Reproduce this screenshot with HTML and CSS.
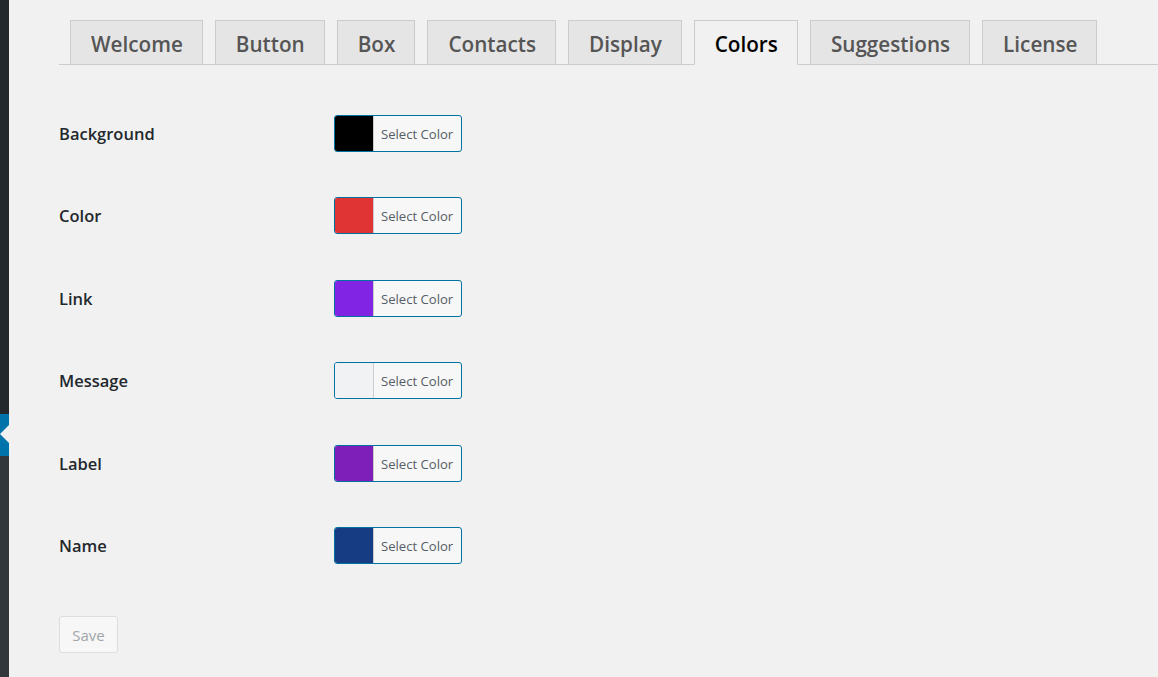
FILE: index.html
```html
<!DOCTYPE html>
<html lang="en">
<head>
<meta charset="UTF-8">
<meta name="viewport" content="width=device-width, initial-scale=1.0">
<title>Colors</title>
<link rel="stylesheet" href="styles.css">
</head>
<body>
<div class="sidebar">
    <div class="menu-top"></div>
    <div class="menu-current"><span class="menu-arrow"></span></div>
    <div class="menu-sub"></div>
</div>
<div class="wrap">
    <nav class="nav-tabs">
        <a class="nav-tab" href="#">Welcome</a>
        <a class="nav-tab" href="#">Button</a>
        <a class="nav-tab" href="#">Box</a>
        <a class="nav-tab" href="#">Contacts</a>
        <a class="nav-tab" href="#">Display</a>
        <a class="nav-tab active" href="#">Colors</a>
        <a class="nav-tab" href="#">Suggestions</a>
        <a class="nav-tab" href="#">License</a>
    </nav>
    <form class="colors-form">
        <div class="form-row">
            <label>Background</label>
            <button type="button" class="color-result"><span class="swatch" style="background:#000000"></span><span class="color-text">Select Color</span></button>
        </div>
        <div class="form-row">
            <label>Color</label>
            <button type="button" class="color-result"><span class="swatch" style="background:#e03434"></span><span class="color-text">Select Color</span></button>
        </div>
        <div class="form-row">
            <label>Link</label>
            <button type="button" class="color-result"><span class="swatch" style="background:#8224e3"></span><span class="color-text">Select Color</span></button>
        </div>
        <div class="form-row">
            <label>Message</label>
            <button type="button" class="color-result"><span class="swatch" style="background:#f1f2f3"></span><span class="color-text">Select Color</span></button>
        </div>
        <div class="form-row">
            <label>Label</label>
            <button type="button" class="color-result"><span class="swatch" style="background:#7f1fba"></span><span class="color-text">Select Color</span></button>
        </div>
        <div class="form-row">
            <label>Name</label>
            <button type="button" class="color-result"><span class="swatch" style="background:#163d83"></span><span class="color-text">Select Color</span></button>
        </div>
        <button type="button" class="save-btn" disabled>Save</button>
    </form>
</div>
</body>
</html>
```

FILE: styles.css
```css
* {
    margin: 0;
    padding: 0;
    box-sizing: border-box;
}
body {
    display: flex;
    min-height: 100vh;
    background: #f1f1f1;
    font-family: 'Open Sans', 'Noto Sans', sans-serif;
    color: #23282d;
}
.sidebar {
    width: 9px;
    flex-shrink: 0;
    display: flex;
    flex-direction: column;
}
.menu-top {
    height: 414px;
    background: #23282d;
}
.menu-current {
    position: relative;
    height: 42px;
    background: #0073aa;
}
.menu-arrow {
    position: absolute;
    right: 0;
    top: 11px;
    border-top: 9px solid transparent;
    border-bottom: 9px solid transparent;
    border-right: 9px solid #f1f1f1;
}
.menu-sub {
    flex: 1;
    background: #32373c;
}
.wrap {
    flex: 1;
    padding: 20px 0 0 50px;
}
.nav-tabs {
    display: flex;
    gap: 12px;
    padding-left: 11px;
    border-bottom: 1px solid #ccc;
}
.nav-tab {
    display: block;
    height: 45px;
    margin-bottom: -1px;
    padding: 2px 19px 0 20px;
    border: 1px solid #ccc;
    background: #e5e5e5;
    color: #555;
    font-size: 20.7px;
    font-weight: 600;
    line-height: 43px;
    text-decoration: none;
}
.nav-tab.active {
    background: #f1f1f1;
    border-bottom-color: #f1f1f1;
    color: #000;
}
.colors-form {
    display: flex;
    flex-direction: column;
    align-items: flex-start;
    gap: 45.4px;
    padding-top: 50px;
}
.form-row {
    display: grid;
    grid-template-columns: 275px auto;
    align-items: center;
}
.form-row label {
    font-size: 16.5px;
    font-weight: 600;
    color: #23282d;
}
.color-result {
    display: flex;
    height: 37px;
    border: 1px solid #0071a1;
    border-radius: 3px;
    overflow: hidden;
    background: #f7f7f7;
    cursor: pointer;
    font-family: inherit;
}
.swatch {
    width: 39px;
    border-right: 1px solid #ccc;
}
.color-text {
    padding: 1px 8px 0 7px;
    font-size: 13.1px;
    line-height: 35px;
    color: #555d66;
}
.save-btn {
    margin-top: 7px;
    width: 59px;
    height: 37px;
    border: 1px solid #ddd;
    border-radius: 3px;
    background: #f7f7f7;
    color: #a0a5aa;
    font-family: inherit;
    font-size: 15px;
}
```
